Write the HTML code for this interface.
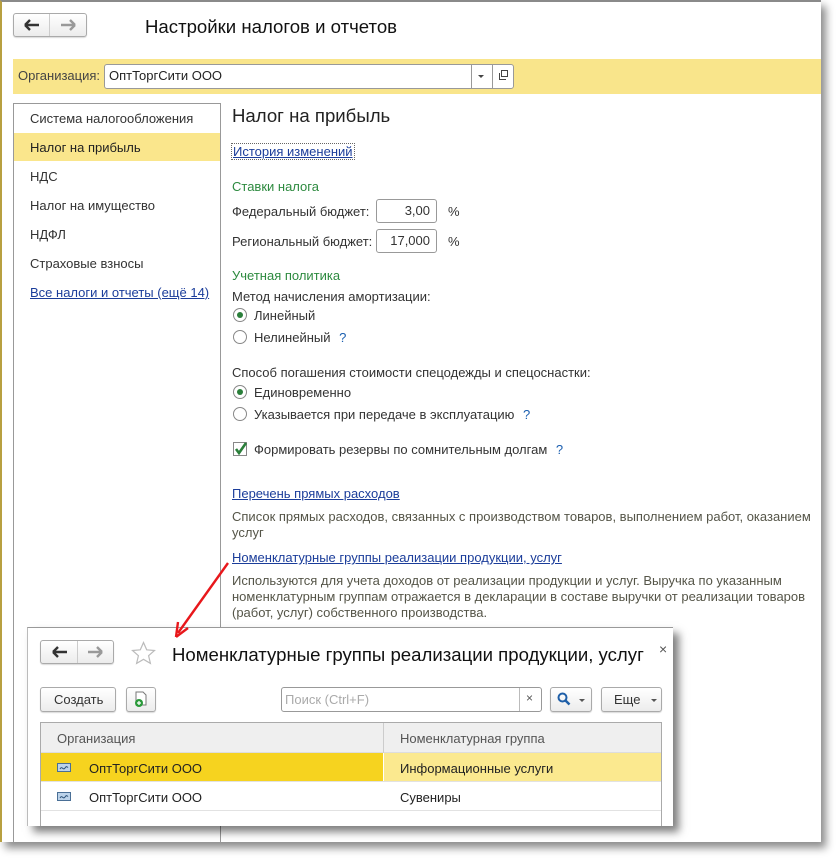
<!DOCTYPE html>
<html><head><meta charset="utf-8"><style>
*{box-sizing:border-box;margin:0;padding:0}
body{width:837px;height:858px;background:#fff;position:relative;overflow:hidden;font-family:"Liberation Sans",Arial,sans-serif;font-size:13px;color:#333}
.a{position:absolute;white-space:nowrap}
#main{position:absolute;left:0;top:0;width:821px;height:842px;background:#fff;border-top:2px solid #8a8a8a;border-left:2px solid #b8a040;box-shadow:5px 6px 8px rgba(0,0,0,.45)}
.btn{position:absolute;border:1px solid #aaa;border-radius:3px;background:linear-gradient(#fff,#ececec);box-shadow:0 1px 1px rgba(0,0,0,.15)}
.lnk{color:#1b3d9a;text-decoration:underline}
.grn{color:#2d8a3f}
.inp{position:absolute;border:1px solid #999;border-radius:3px;background:#fff;text-align:right;padding-right:6px;line-height:22px}
.rad{position:absolute;width:14px;height:14px;border:1px solid #888;border-radius:50%;background:#fff}
.rad.on::after{content:"";position:absolute;left:3px;top:3px;width:6px;height:6px;border-radius:50%;background:#2a7f3a}
.desc{color:#555548}
</style></head><body>
<div id="main"></div>
<!-- top nav buttons -->
<div class="btn" style="left:13px;top:13px;width:74px;height:24px"></div>
<div class="a" style="left:49px;top:14px;width:1px;height:22px;background:#ccc"></div>
<svg class="a" style="left:24px;top:19px" width="16" height="12"><path d="M1 6h14M1 6l5-5M1 6l5 5" stroke="#333" stroke-width="2.4" fill="none"/></svg>
<svg class="a" style="left:60px;top:19px" width="16" height="12"><path d="M15 6H1M15 6l-5-5M15 6l-5 5" stroke="#999" stroke-width="2.4" fill="none"/></svg>
<div class="a" style="left:145px;top:16px;font-size:18.6px;color:#111">Настройки налогов и отчетов</div>
<!-- yellow band -->
<div class="a" style="left:13px;top:59px;width:808px;height:35px;background:#f9e58b"></div>
<div class="a" style="left:18px;top:68px;color:#444">Организация:</div>
<div class="a" style="left:104px;top:64px;width:410px;height:25px;border:1px solid #999;border-radius:3px;background:#fff"></div>
<div class="a" style="left:471px;top:65px;width:1px;height:23px;background:#999"></div>
<div class="a" style="left:492px;top:65px;width:1px;height:23px;background:#999"></div>
<div class="a" style="left:109px;top:68px;color:#222">ОптТоргСити ООО</div>
<div class="a" style="left:478px;top:75px;width:0;height:0;border-left:3px solid transparent;border-right:3px solid transparent;border-top:3px solid #444"></div>
<svg class="a" style="left:498px;top:69px" width="12" height="12"><rect x="3.5" y="1.5" width="6" height="6" fill="none" stroke="#444"/><path d="M1.5 4v6.5h6.5" fill="none" stroke="#444"/></svg>
<!-- left nav -->
<div class="a" style="left:13px;top:103px;width:208px;height:740px;border:1px solid #999;border-bottom:none"></div>
<div class="a" style="left:14px;top:133px;width:206px;height:28px;background:#fae68c"></div>
<div class="a" style="left:30px;top:111px;color:#333">Система налогообложения</div>
<div class="a" style="left:30px;top:140px;color:#222">Налог на прибыль</div>
<div class="a" style="left:30px;top:169px">НДС</div>
<div class="a" style="left:30px;top:198px">Налог на имущество</div>
<div class="a" style="left:30px;top:227px">НДФЛ</div>
<div class="a" style="left:30px;top:256px">Страховые взносы</div>
<div class="a lnk" style="left:30px;top:285px">Все налоги и отчеты (ещё 14)</div>
<!-- content -->
<div class="a" style="left:232px;top:105px;font-size:18.6px;color:#222">Налог на прибыль</div>
<div class="a lnk" style="left:232px;top:144px;outline:1px dotted #666;padding:0 1px">История изменений</div>
<div class="a grn" style="left:232px;top:179px">Ставки налога</div>
<div class="a" style="left:232px;top:204px">Федеральный бюджет:</div>
<div class="inp" style="left:376px;top:199px;width:61px;height:24px">3,00</div>
<div class="a" style="left:448px;top:204px">%</div>
<div class="a" style="left:232px;top:234px">Региональный бюджет:</div>
<div class="inp" style="left:376px;top:229px;width:61px;height:24px">17,000</div>
<div class="a" style="left:448px;top:234px">%</div>
<div class="a grn" style="left:232px;top:268px">Учетная политика</div>
<div class="a" style="left:232px;top:289px">Метод начисления амортизации:</div>
<div class="rad on" style="left:233px;top:308px"></div>
<div class="a" style="left:254px;top:308px">Линейный</div>
<div class="rad" style="left:233px;top:330px"></div>
<div class="a" style="left:254px;top:330px">Нелинейный <span style="color:#1b5fb0;margin-left:5px">?</span></div>
<div class="a" style="left:232px;top:365px">Способ погашения стоимости спецодежды и спецоснастки:</div>
<div class="rad on" style="left:233px;top:385px"></div>
<div class="a" style="left:254px;top:385px">Единовременно</div>
<div class="rad" style="left:233px;top:407px"></div>
<div class="a" style="left:254px;top:407px">Указывается при передаче в эксплуатацию <span style="color:#1b5fb0;margin-left:5px">?</span></div>
<div class="a" style="left:233px;top:442px;width:14px;height:14px;border:1px solid #888;background:#fff"></div>
<svg class="a" style="left:233px;top:441px" width="16" height="16"><path d="M3 8l3 4 7-10" fill="none" stroke="#2a7f3a" stroke-width="2.6"/></svg>
<div class="a" style="left:254px;top:442px">Формировать резервы по сомнительным долгам <span style="color:#1b5fb0;margin-left:5px">?</span></div>
<div class="a lnk" style="left:232px;top:486px">Перечень прямых расходов</div>
<div class="a desc" style="left:232px;top:509px">Список прямых расходов, связанных с производством товаров, выполнением работ, оказанием</div>
<div class="a desc" style="left:232px;top:525px">услуг</div>
<div class="a lnk" style="left:232px;top:550px">Номенклатурные группы реализации продукции, услуг</div>
<div class="a desc" style="left:232px;top:573px">Используются для учета доходов от реализации продукции и услуг. Выручка по указанным</div>
<div class="a desc" style="left:232px;top:589px">номенклатурным группам отражается в декларации в составе выручки от реализации товаров</div>
<div class="a desc" style="left:232px;top:605px">(работ, услуг) собственного производства.</div>
<!-- popup -->
<div class="a" style="left:27px;top:627px;width:646px;height:199px;background:#fff;border-top:1px solid #999;border-left:1px solid #bbb;box-shadow:6px 6px 8px rgba(0,0,0,.5)"></div>
<div class="btn" style="left:40px;top:640px;width:74px;height:24px"></div>
<div class="a" style="left:77px;top:641px;width:1px;height:22px;background:#ccc"></div>
<svg class="a" style="left:52px;top:646px" width="16" height="12"><path d="M1 6h14M1 6l5-5M1 6l5 5" stroke="#333" stroke-width="2.4" fill="none"/></svg>
<svg class="a" style="left:87px;top:646px" width="16" height="12"><path d="M15 6H1M15 6l-5-5M15 6l-5 5" stroke="#999" stroke-width="2.4" fill="none"/></svg>
<svg class="a" style="left:131px;top:641px" width="25" height="25"><path d="M12.5 1.5l3.2 7.3 7.8.7-5.9 5.2 1.8 7.7-6.9-4.1-6.9 4.1 1.8-7.7-5.9-5.2 7.8-.7z" fill="none" stroke="#bbb" stroke-width="1.2"/></svg>
<div class="a" style="left:172px;top:644px;font-size:18.6px;color:#111">Номенклатурные группы реализации продукции, услуг</div>
<div class="a" style="left:659px;top:641px;font-size:14px;color:#555">×</div>
<div class="btn" style="left:40px;top:687px;width:76px;height:25px"></div>
<div class="a" style="left:54px;top:692px;color:#333">Создать</div>
<div class="btn" style="left:126px;top:687px;width:30px;height:25px"></div>
<svg class="a" style="left:132px;top:690px" width="18" height="18"><path d="M4 2h7l3 3v10H4z" fill="#fff" stroke="#777"/><circle cx="7" cy="13" r="4" fill="#2a9a3a"/><path d="M7 11v4M5 13h4" stroke="#fff" stroke-width="1.3"/></svg>
<div class="a" style="left:281px;top:687px;width:261px;height:25px;border:1px solid #999;border-radius:3px;background:#fff"></div>
<div class="a" style="left:519px;top:688px;width:1px;height:23px;background:#bbb"></div>
<div class="a" style="left:285px;top:692px;color:#aaa">Поиск (Ctrl+F)</div>
<div class="a" style="left:526px;top:691px;color:#555;font-size:12px">×</div>
<div class="btn" style="left:550px;top:687px;width:42px;height:25px"></div>
<svg class="a" style="left:557px;top:692px" width="14" height="14"><circle cx="5.5" cy="5.5" r="4" fill="none" stroke="#1f5fa8" stroke-width="2"/><path d="M8.5 8.5l4 4" stroke="#1f5fa8" stroke-width="2.5"/></svg>
<div class="a" style="left:579px;top:699px;border-left:3px solid transparent;border-right:3px solid transparent;border-top:3px solid #555"></div>
<div class="btn" style="left:601px;top:687px;width:61px;height:25px"></div>
<div class="a" style="left:614px;top:692px;color:#333">Еще</div>
<div class="a" style="left:651px;top:699px;border-left:3px solid transparent;border-right:3px solid transparent;border-top:3px solid #555"></div>
<!-- table -->
<div class="a" style="left:40px;top:722px;width:622px;height:104px;border:1px solid #aaa;border-bottom:none"></div>
<div class="a" style="left:41px;top:723px;width:620px;height:30px;background:#efefef;border-bottom:1px solid #ddd"></div>
<div class="a" style="left:383px;top:723px;width:1px;height:30px;background:#ccc"></div>
<div class="a" style="left:57px;top:731px;color:#555">Организация</div>
<div class="a" style="left:400px;top:731px;color:#555">Номенклатурная группа</div>
<div class="a" style="left:41px;top:753px;width:342px;height:28px;background:#f6d31f"></div>
<div class="a" style="left:384px;top:753px;width:277px;height:28px;background:#fbe98f"></div>
<div class="a" style="left:41px;top:781px;width:620px;height:1px;background:#e2e2e2"></div>
<div class="a" style="left:41px;top:810px;width:620px;height:1px;background:#e2e2e2"></div>
<svg class="a" style="left:57px;top:763px" width="14" height="9"><rect x=".5" y=".5" width="13" height="8" fill="#bcd3ea" stroke="#4a6f96"/><path d="M3 6c2-4 3 2 5-1s2 0 3-1" fill="none" stroke="#2a4f76"/></svg>
<svg class="a" style="left:57px;top:792px" width="14" height="9"><rect x=".5" y=".5" width="13" height="8" fill="#bcd3ea" stroke="#4a6f96"/><path d="M3 6c2-4 3 2 5-1s2 0 3-1" fill="none" stroke="#2a4f76"/></svg>
<div class="a" style="left:89px;top:761px;color:#222">ОптТоргСити ООО</div>
<div class="a" style="left:400px;top:761px;color:#222">Информационные услуги</div>
<div class="a" style="left:89px;top:790px;color:#222">ОптТоргСити ООО</div>
<div class="a" style="left:400px;top:790px;color:#222">Сувениры</div>
<!-- arrow -->
<svg class="a" style="left:165px;top:555px" width="70" height="90"><path d="M63 8L13 78" stroke="#e8171b" stroke-width="2.4"/><path d="M11 82l2-15M11 82l12-9" stroke="#e8171b" stroke-width="2.4" fill="none"/></svg>
</body></html>
